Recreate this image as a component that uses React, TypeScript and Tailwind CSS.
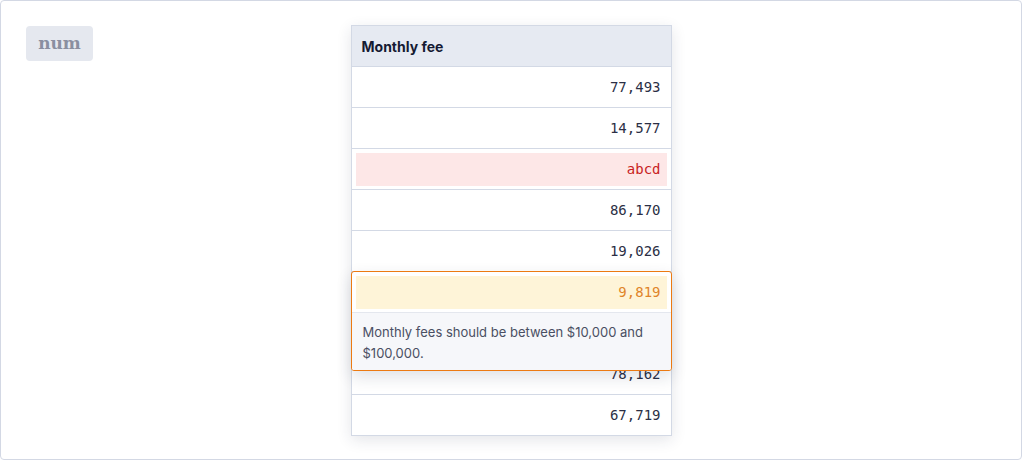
const rows = [
  { value: '77,493' },
  { value: '14,577' },
  { value: 'abcd', state: 'error' },
  { value: '86,170' },
  { value: '19,026' },
  { value: '9,819', state: 'warning' },
  { value: '' },
  { value: '78,162' },
  { value: '67,719' },
];

function Cell({ value, state }: { value: string; state?: string }) {
  if (state === 'error') {
    return (
      <div className="h-[41px] border-b border-[#d3d9e5] p-1">
        <div className="h-[33px] bg-[#fde7e7] px-[6px] flex items-center justify-end text-[#c81e1e]">{value}</div>
      </div>
    );
  }
  return (
    <div className="h-[41px] border-b border-[#d3d9e5] px-[10px] flex items-center justify-end text-[#2b2f45]">
      {value}
    </div>
  );
}

export default function App() {
  return (
    <div className="w-[1022px] h-[460px] bg-white border border-[#d3d8e4] rounded-[4px] grid grid-cols-[1fr_auto_1fr] items-start px-[25px] pt-[24px]">
      <div>
        <div className="w-[67px] h-[35px] mt-[1px] rounded-[4px] bg-[#e5e8ef] flex items-center justify-center text-[#8a8fa0] text-[17px] font-bold" style={{ fontFamily: '"DejaVu Serif", serif' }}>
          num
        </div>
      </div>

      <div className="relative w-[321px] border border-[#d3d9e5] border-b-0 bg-white shadow-[0_4px_14px_rgba(30,40,70,0.12)]">
        <div className="h-[41px] bg-[#e6eaf2] border-b border-[#d3d9e5] px-[10px] flex items-center text-[14px] font-bold text-[#151a33]" style={{ fontFamily: 'Inter, sans-serif' }}>
          Monthly fee
        </div>
        <div className="text-[14px]" style={{ fontFamily: '"DejaVu Sans Mono", monospace' }}>
          {rows.map((r, i) => (
            <Cell key={i} value={r.value} state={r.state} />
          ))}
        </div>

        {/* validation popover */}
        <div className="absolute z-10 left-[-1px] right-[-1px] top-[245px] rounded-[3px] border-[1.5px] border-[#ec7a12] bg-white overflow-hidden shadow-[0_6px_16px_rgba(30,40,70,0.14)]">
          <div className="p-1 pb-[3px]">
            <div className="h-[33px] bg-[#fef4d8] px-[6px] flex items-center justify-end text-[14px] text-[#e0842a]" style={{ fontFamily: '"DejaVu Sans Mono", monospace' }}>
              9,819
            </div>
          </div>
          <div className="border-t border-[#e4e7ee] bg-[#f6f7fa] px-[11px] pt-[9px] pb-[6px] text-[13px] leading-[21px] text-[#4a4f63]" style={{ fontFamily: 'Inter, sans-serif' }}>
            Monthly fees should be between $10,000 and $100,000.
          </div>
        </div>
      </div>

      <div />
    </div>
  );
}
